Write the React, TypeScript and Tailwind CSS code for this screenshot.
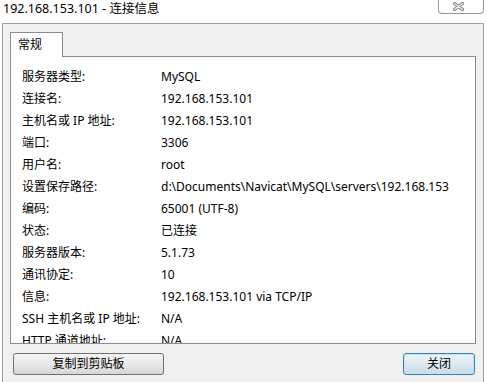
import React from "react";

const rows: [string, string][] = [
  ["服务器类型:", "MySQL"],
  ["连接名:", "192.168.153.101"],
  ["主机名或 IP 地址:", "192.168.153.101"],
  ["端口:", "3306"],
  ["用户名:", "root"],
  ["设置保存路径:", "d:\\Documents\\Navicat\\MySQL\\servers\\192.168.153.101"],
  ["编码:", "65001 (UTF-8)"],
  ["状态:", "已连接"],
  ["服务器版本:", "5.1.73"],
  ["通讯协定:", "10"],
  ["信息:", "192.168.153.101 via TCP/IP"],
  ["SSH 主机名或 IP 地址:", "N/A"],
  ["HTTP 通道地址:", "N/A"],
];

export default function App() {
  return (
    <div
      className="w-[487px] h-[382px] bg-white overflow-hidden flex flex-col text-black text-[12px]"
      style={{ fontFamily: '"Noto Sans", "Noto Sans CJK SC", sans-serif' }}
    >
      {/* Title bar */}
      <div className="h-[23px] flex justify-between items-start shrink-0">
        <div className="pl-[3px] leading-[18px] text-[12.5px]">192.168.153.101 - 连接信息</div>
        <div className="w-[46px] h-[14px] mr-[3px] border-l border-r border-b border-[#9a9a9a] rounded-b-[4px] bg-white flex items-center justify-center pr-[6px]">
          <svg width="11" height="9" viewBox="0 0 11 9">
            <path d="M1.5 1.5 L9.5 7.5 M9.5 1.5 L1.5 7.5" stroke="#7a7a7a" strokeWidth="3" strokeLinecap="round" fill="none" />
            <path d="M1.5 1.5 L9.5 7.5 M9.5 1.5 L1.5 7.5" stroke="#f4f4f4" strokeWidth="1.2" strokeLinecap="round" fill="none" />
          </svg>
        </div>
      </div>

      {/* Window frame */}
      <div className="ml-[2px] w-[482px] flex-1 border-l border-t border-r border-[#a0a0a0] bg-[#f0f0f0] pt-[8px] pl-[7px] flex flex-col">
        {/* Tab */}
        <div className="relative z-10 -mb-px w-[53px] h-[25px] bg-white border-l border-t border-r border-[#898c95] pl-[7px] leading-[23px]">
          常规
        </div>
        {/* Content panel */}
        <div className="w-[466px] h-[288px] bg-white border border-[#898c95] overflow-hidden pt-[9px] pl-[11px]">
          {rows.map(([k, v]) => (
            <div key={k} className="flex h-[22px] leading-[22px] whitespace-nowrap">
              <div className="w-[139px] shrink-0">{k}</div>
              <div className="w-[288px] overflow-hidden">{v}</div>
            </div>
          ))}
        </div>
        {/* Buttons */}
        <div className="mt-[9px] flex justify-between pl-[3px] pr-[8px]">
          <button className="w-[151px] h-[22px] rounded-[3px] border border-[#707070] bg-gradient-to-b from-[#f4f4f4] via-[#e8e8e8] to-[#d6d6d6] leading-[20px] text-[12px]">
            复制到剪贴板
          </button>
          <button className="w-[72px] h-[22px] rounded-[3px] border border-[#3c7fb1] bg-gradient-to-b from-[#eef5fa] via-[#dde9f2] to-[#c8dbe9] leading-[20px] text-[12px] shadow-[inset_0_0_0_1px_#bfe3f7]">
            关闭
          </button>
        </div>
      </div>
    </div>
  );
}
